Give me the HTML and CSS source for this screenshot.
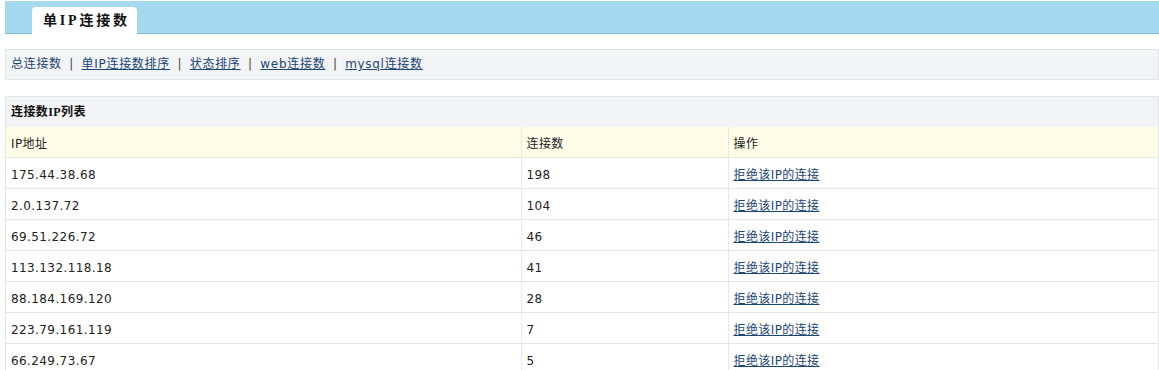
FILE: index.html
```html
<!DOCTYPE html>
<html lang="zh-CN">
<head>
<meta charset="utf-8">
<title>单IP连接数</title>
<link rel="stylesheet" href="styles.css">
</head>
<body>
<div class="page">
  <div class="tabbar">
    <div class="tab">单IP连接数</div>
  </div>

  <div class="subnav">
    <span class="current">总连接数</span>
    <span class="sep">|</span>
    <a href="#">单IP连接数排序</a>
    <span class="sep">|</span>
    <a href="#">状态排序</a>
    <span class="sep">|</span>
    <a href="#">web连接数</a>
    <span class="sep">|</span>
    <a href="#">mysql连接数</a>
  </div>

  <div class="panel">
    <div class="panel-title">连接数IP列表</div>
    <table class="list">
      <colgroup>
        <col class="c1"><col class="c2"><col class="c3">
      </colgroup>
      <thead>
        <tr><th>IP地址</th><th>连接数</th><th>操作</th></tr>
      </thead>
      <tbody>
        <tr><td class="num">175.44.38.68</td><td class="num">198</td><td><a href="#">拒绝该IP的连接</a></td></tr>
        <tr><td class="num">2.0.137.72</td><td class="num">104</td><td><a href="#">拒绝该IP的连接</a></td></tr>
        <tr><td class="num">69.51.226.72</td><td class="num">46</td><td><a href="#">拒绝该IP的连接</a></td></tr>
        <tr><td class="num">113.132.118.18</td><td class="num">41</td><td><a href="#">拒绝该IP的连接</a></td></tr>
        <tr><td class="num">88.184.169.120</td><td class="num">28</td><td><a href="#">拒绝该IP的连接</a></td></tr>
        <tr><td class="num">223.79.161.119</td><td class="num">7</td><td><a href="#">拒绝该IP的连接</a></td></tr>
        <tr><td class="num">66.249.73.67</td><td class="num">5</td><td><a href="#">拒绝该IP的连接</a></td></tr>
      </tbody>
    </table>
  </div>
</div>
</body>
</html>
```

FILE: styles.css
```css
html, body {
  margin: 0;
  padding: 0;
  background: #ffffff;
}

body {
  font-family: "DejaVu Sans", "Noto Sans CJK SC", sans-serif;
  font-size: 12px;
  color: #222222;
  letter-spacing: 0.4px;
}

.page {
  margin-left: 5px;
  padding-top: 1px;
}

.tabbar {
  display: flex;
  align-items: flex-end;
  height: 32px;
  padding-left: 27px;
  background: #a4d9ef;
  border-bottom: 1px solid #80bcd6;
}

.tab {
  height: 27px;
  margin-bottom: -1px;
  width: 105px;
  box-sizing: border-box;
  padding-left: 11px;
  background: #ffffff;
  border-radius: 4px 4px 0 0;
  font-family: "Liberation Serif", "Noto Sans CJK SC", serif;
  font-weight: bold;
  font-size: 14px;
  letter-spacing: 2.8px;
  line-height: 27px;
  color: #111111;
}

.subnav {
  margin-top: 15px;
  height: 29px;
  line-height: 29px;
  padding-left: 5px;
  background: #f2f3f5;
  border: 1px solid #e2e3e5;
  color: #22456e;
  letter-spacing: 0.7px;
}

.subnav a {
  color: #1b4675;
  text-decoration: underline;
}

.subnav .current {
  color: #22456e;
}

.subnav .sep {
  color: #444444;
  margin: 0 3px;
}

.panel {
  margin-top: 16px;
  border-left: 1px solid #e2e3e5;
  border-right: 1px solid #e2e3e5;
}

.panel-title {
  height: 30px;
  line-height: 30px;
  padding-left: 5px;
  background: #f2f3f5;
  border-top: 1px solid #e2e3e5;
  font-weight: bold;
  font-family: "Liberation Serif", "Noto Sans CJK SC", serif;
  color: #111111;
}

.list {
  width: 100%;
  border-collapse: collapse;
  table-layout: fixed;
}

.list col.c1 { width: 515px; }
.list col.c2 { width: 207px; }

.list th,
.list td {
  height: 30px;
  padding: 0 0 0 5px;
  text-align: left;
  font-weight: normal;
  border-bottom: 1px solid #e4e4e4;
  border-left: 1px solid #e8e8e8;
  vertical-align: middle;
}

.list th:first-child,
.list td:first-child {
  border-left: none;
}

.list thead th {
  background: #fffde8;
  color: #222222;
}

.list td.num {
  height: 26px;
  padding-top: 4px;
}

.list td a {
  color: #1b4675;
  text-decoration: underline;
}
```
